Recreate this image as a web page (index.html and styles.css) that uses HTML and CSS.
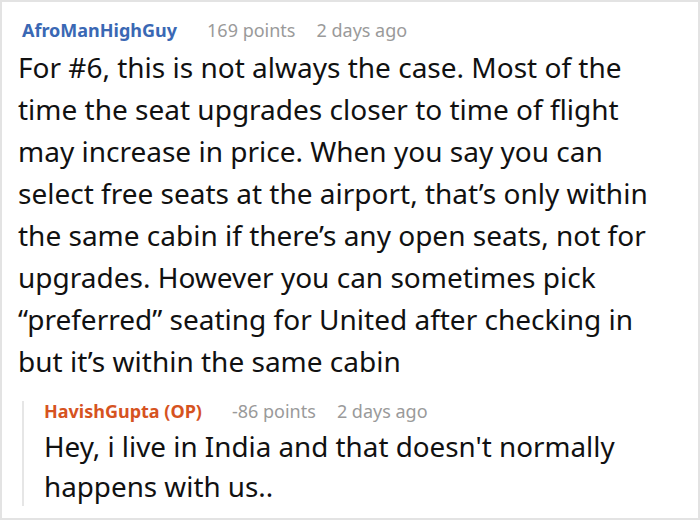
FILE: index.html
```html
<!DOCTYPE html>
<html>
<head>
<meta charset="utf-8">
<link rel="stylesheet" href="styles.css">
</head>
<body>
<div class="card">
  <div class="comment">
    <div class="meta">
      <span class="author">AfroManHighGuy</span>
      <span class="info">169 points</span>
      <span class="info">2 days ago</span>
    </div>
    <p class="body">For #6, this is not always the case. Most of the<br>time the seat upgrades closer to time of flight<br>may increase in price. When you say you can<br>select free seats at the airport, that’s only within<br>the same cabin if there’s any open seats, not for<br>upgrades. However you can sometimes pick<br>“preferred” seating for United after checking in<br>but it’s within the same cabin</p>
  </div>
  <div class="reply">
    <div class="meta">
      <span class="author op">HavishGupta (OP)</span>
      <span class="info">-86 points</span>
      <span class="info">2 days ago</span>
    </div>
    <p class="reply-body">Hey, i live in India and that doesn't normally<br>happens with us..</p>
  </div>
</div>
</body>
</html>
```

FILE: styles.css
```css
html, body {
  margin: 0;
  padding: 0;
  background: #fff;
}
.card {
  box-sizing: border-box;
  width: 700px;
  height: 520px;
  border: 2px solid #e3e3e3;
  padding: 16px 0 0 16px;
  font-family: "Noto Sans", "Open Sans", sans-serif;
  color: #111;
  overflow: hidden;
}
.meta {
  display: flex;
  gap: 21px;
  font-size: 18px;
  line-height: 24px;
  white-space: nowrap;
}
.comment > .meta {
  margin-left: 4px;
}
.author {
  font-weight: 700;
  color: #3a68b4;
  margin-right: 9px;
}
.author.op {
  color: #d6531f;
}
.info {
  color: #9a9a9a;
}
.body {
  margin: 4px 0 0 0;
  font-size: 28px;
  line-height: 42px;
  white-space: nowrap;
}
.reply {
  margin: 19px 0 0 4px;
  border-left: 2px solid #e6e6e6;
  padding-left: 20px;
}
.reply .meta {
  line-height: 20px;
}
.reply-body {
  margin: 5px 0 0 0;
  font-size: 27.8px;
  line-height: 40px;
  white-space: nowrap;
}
```
